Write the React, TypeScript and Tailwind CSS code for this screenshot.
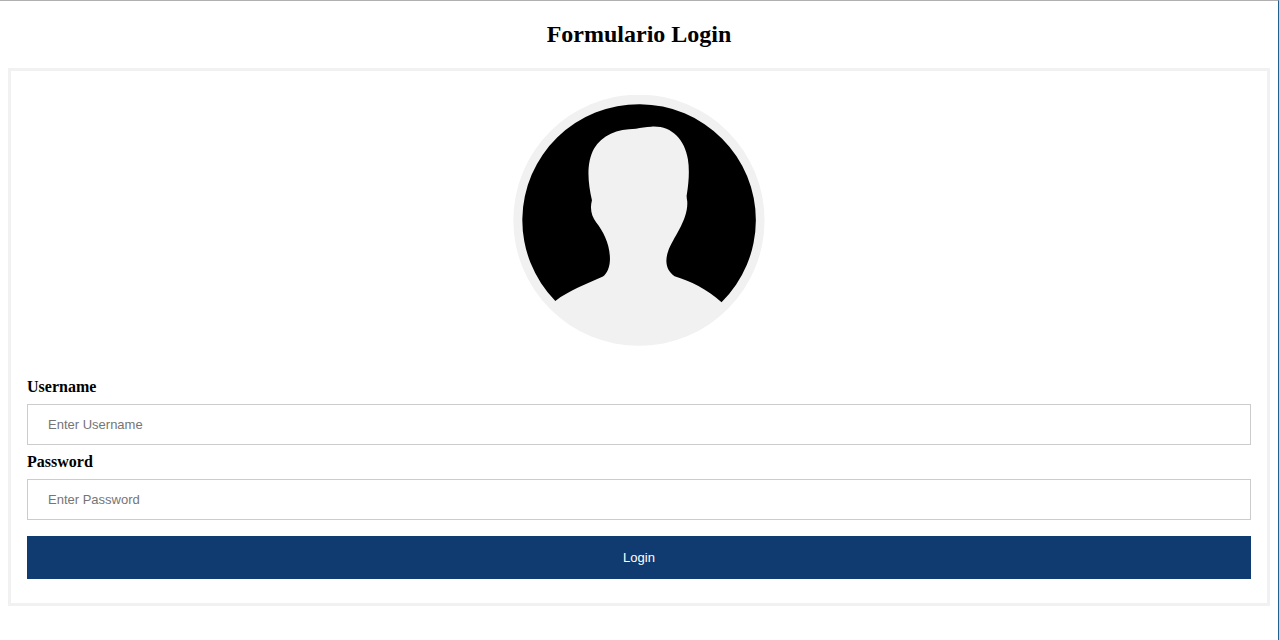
function Avatar() {
  return (
    <svg viewBox="38 29 754 754" role="img" aria-label="Avatar" className="block aspect-square w-1/5">
      <circle cx="416" cy="405" r="377" fill="#f1f1f1" />
      <path
        fill="#000"
        d="M165 647 A350.5 348 0 1 1 664 651 C620 612 570 587 523 573 C499 556 493 530 503 500 C519 455 565 404 561 348 C560 340 558 334 560 326 C566 290 568 252 563 222 C553 160 512 120 453 124 C437 124 422 127 407 130 C350 131 305 149 281 190 C258 232 262 290 275 345 C268 372 274 392 288 412 C310 440 330 480 329 524 C328 546 321 563 308 574 C258 596 207 616 165 647 Z"
      />
    </svg>
  );
}

function Field({ id, type, label }: { id: string; type: string; label: string }) {
  return (
    <div className="flex flex-col gap-2">
      <label htmlFor={id} className="text-base leading-[18px] font-bold">
        {label}
      </label>
      <input
        id={id}
        name={id}
        type={type}
        required
        placeholder={`Enter ${label}`}
        className="w-full border border-[#cccccc] px-5 py-3 font-['Liberation_Sans',Arial,sans-serif] text-[13px] leading-[15px] placeholder:text-[#757575]"
      />
    </div>
  );
}

export default function App() {
  return (
    <main className="min-h-screen border-t border-r border-t-[#b0b0b0] border-r-[#1f618f] bg-white px-2 font-['Liberation_Serif','Times_New_Roman',serif] text-black">
      <h2 className="py-5 text-center text-2xl leading-[27px] font-bold">Formulario Login</h2>
      <form className="border-[3px] border-[#f1f1f1]" onSubmit={(event) => event.preventDefault()}>
        <div className="flex justify-center pt-6 pb-4">
          <Avatar />
        </div>
        <div className="flex flex-col gap-2 px-4 pt-4 pb-6">
          <Field id="username" type="text" label="Username" />
          <Field id="password" type="password" label="Password" />
          <button
            type="submit"
            className="mt-2 w-full cursor-pointer bg-[#0f3b70] px-5 py-[14px] font-['Liberation_Sans',Arial,sans-serif] text-[13px] leading-[15px] text-white"
          >
            Login
          </button>
        </div>
      </form>
    </main>
  );
}
